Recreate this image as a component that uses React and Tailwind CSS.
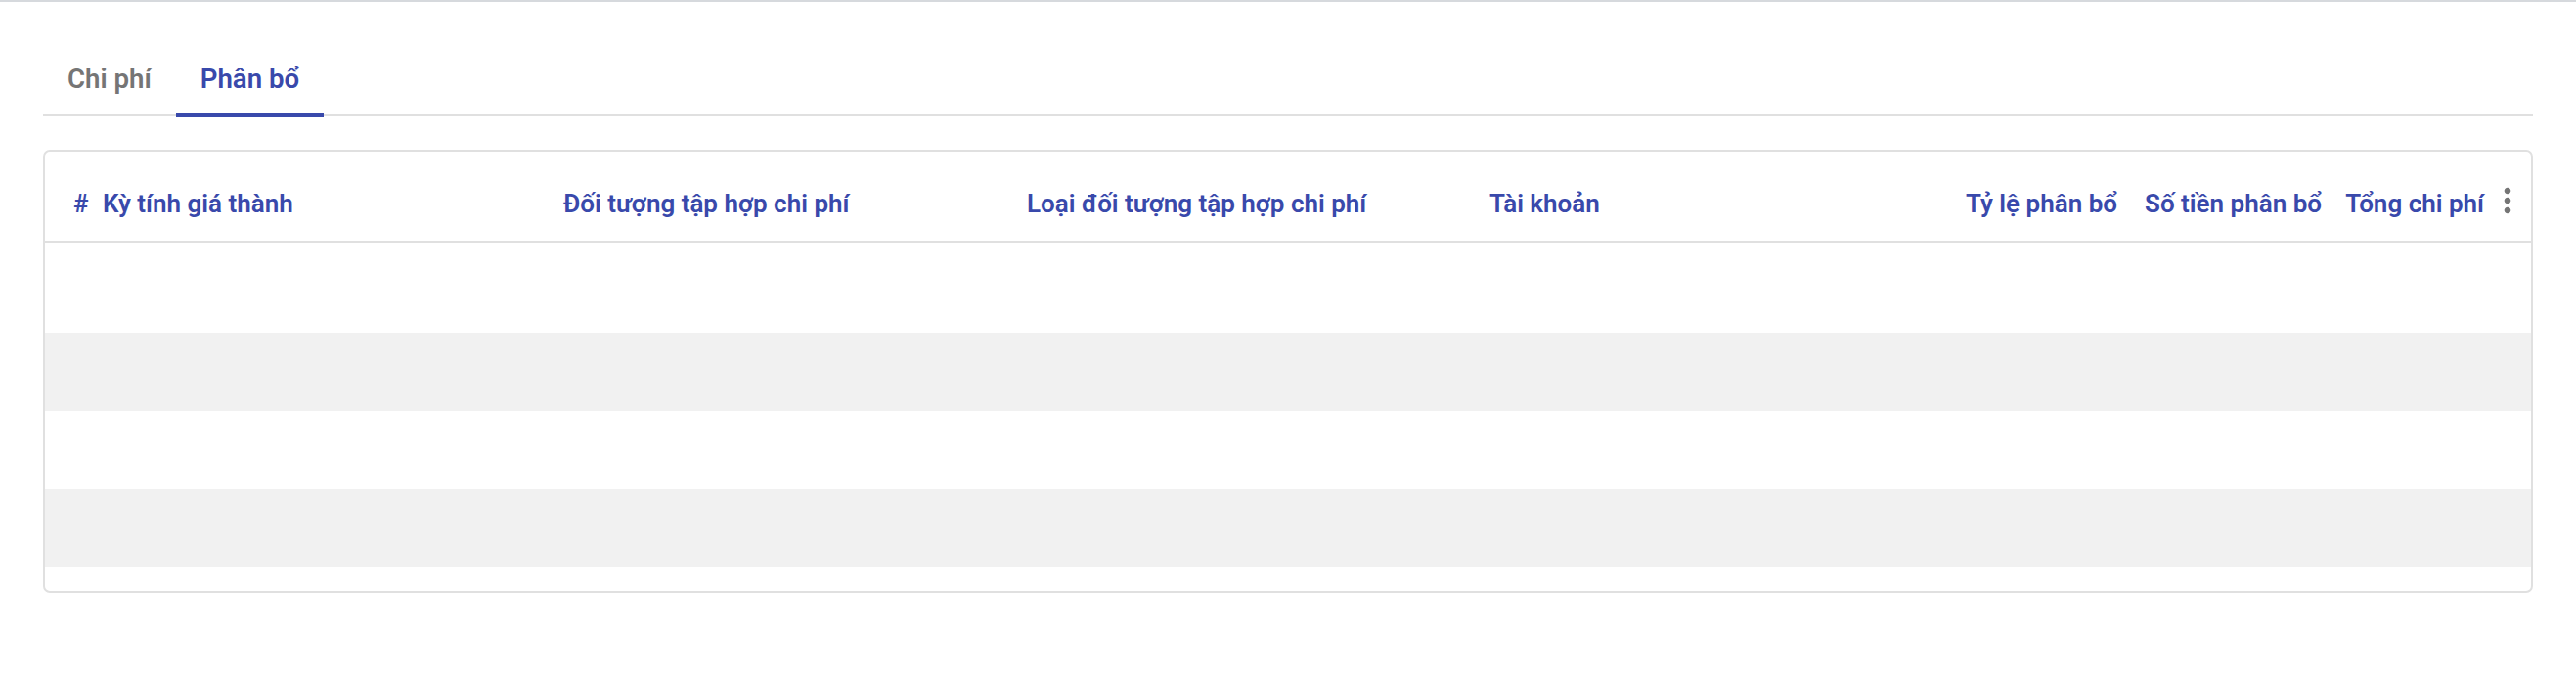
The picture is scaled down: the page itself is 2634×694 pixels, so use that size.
import { useState } from "react";

const COLUMNS = [
  { key: "idx", label: "#", className: "w-[59px] pl-[29px]" },
  { key: "ky", label: "Kỳ tính giá thành", className: "w-[471px]" },
  { key: "doiTuong", label: "Đối tượng tập hợp chi phí", className: "w-[474px]" },
  { key: "loai", label: "Loại đối tượng tập hợp chi phí", className: "w-[473px]" },
  { key: "taiKhoan", label: "Tài khoản", className: "flex-1" },
  { key: "tyLe", label: "Tỷ lệ phân bổ", className: "w-[180px] text-right" },
  { key: "soTien", label: "Số tiền phân bổ", className: "w-[209px] text-right" },
  { key: "tong", label: "Tổng chi phí", className: "w-[166px] text-right" },
];

const ROWS = [0, 1, 2, 3];

function MoreVert() {
  return (
    <svg viewBox="0 0 24 24" className="w-[40px] h-[40px] fill-[#757575]">
      <path d="M12 8c1.1 0 2-.9 2-2s-.9-2-2-2-2 .9-2 2 .9 2 2 2zm0 2c-1.1 0-2 .9-2 2s.9 2 2 2 2-.9 2-2-.9-2-2-2zm0 6c-1.1 0-2 .9-2 2s.9 2 2 2 2-.9 2-2-.9-2-2-2z" />
    </svg>
  );
}

export default function App() {
  const [tab, setTab] = useState("phanBo");

  const tabs = [
    { key: "chiPhi", label: "Chi phí" },
    { key: "phanBo", label: "Phân bổ" },
  ];

  return (
    <div className="min-h-[694px] bg-white [font-family:Roboto,'Liberation_Sans',sans-serif]">
      <div className="h-[2px] bg-[#d6d9dd]" />

      <div className="px-[44px] pt-[43px]">
        <div className="flex border-b-2 border-[#e0e0e0]">
          {tabs.map((t) => (
            <button
              key={t.key}
              type="button"
              onClick={() => setTab(t.key)}
              className={`relative px-[25px] pt-[19px] pb-[20px] text-[27.6px] leading-[33px] font-semibold ${tab === t.key ? "text-[#3949ab]" : "text-[#757575]"}`}
            >
              {t.label}
              {tab === t.key && <span className="absolute left-0 right-0 bottom-[-3px] h-[4px] bg-[#3949ab]" />}
            </button>
          ))}
        </div>

        <div className="mt-[34px] rounded-[7px] border-2 border-[#e0e0e0] overflow-hidden">
          <div className="flex h-[93px] items-center pt-[16px] border-b-2 border-[#e0e0e0] text-[26px] leading-[31px] font-semibold text-[#3949ab]">
            {COLUMNS.map((col) => (
              <div key={col.key} className={`shrink-0 whitespace-nowrap ${col.className}`}>
                {col.label}
              </div>
            ))}
            <div className="w-[48px] shrink-0 flex justify-center -mt-[7px]">
              <MoreVert />
            </div>
          </div>

          <div className="pt-[12px] pb-[24px]">
            {ROWS.map((r) => (
              <div key={r} className={`h-[80px] ${r % 2 === 1 ? "bg-[#f1f1f1]" : "bg-white"}`} />
            ))}
          </div>
        </div>
      </div>
    </div>
  );
}
